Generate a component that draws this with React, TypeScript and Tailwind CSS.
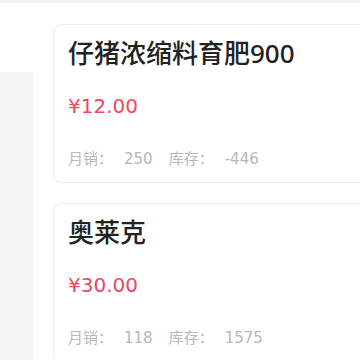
import React from "react";

const items = [
  { name: "仔猪浓缩料育肥900", price: "¥12.00", sales: "250", stock: "-446" },
  { name: "奥莱克", price: "¥30.00", sales: "118", stock: "1575" },
];

export default function App() {
  return (
    <div
      className="w-[360px] h-[360px] overflow-hidden bg-white flex flex-col"
      style={{ fontFamily: '"DejaVu Sans", "Noto Sans CJK SC", sans-serif' }}
    >
      <div className="h-[3px] bg-[#f2f2f2] shrink-0" />
      <div className="flex flex-1">
        <div className="w-[33px] shrink-0 flex flex-col">
          <div className="h-[69px] bg-white" />
          <div className="flex-1 bg-[#f5f5f5]" />
        </div>
        <div className="ml-[20px] mt-[21px] flex flex-col gap-[20px] shrink-0">
          {items.map((it) => (
            <div
              key={it.name}
              className="w-[330px] h-[159px] shrink-0 rounded-[8px] border border-[#ececec] pl-[14px] pt-[11px] flex flex-col"
            >
              <div
                className="text-[26px] leading-[34px] text-[#222] font-medium"
                style={{ fontFamily: '"Noto Sans", "Noto Sans CJK SC", sans-serif' }}
              >
                {it.name}
              </div>
              <div className="mt-[22px] text-[20px] leading-[28px] text-[#f0465f]">{it.price}</div>
              <div className="mt-[29px] text-[15px] leading-[20px] text-[#b8b8b8] flex">
                <span>月销：</span>
                <span className="ml-[11px]">{it.sales}</span>
                <span className="ml-[16px]">库存：</span>
                <span className="ml-[11px]">{it.stock}</span>
              </div>
            </div>
          ))}
        </div>
      </div>
    </div>
  );
}
